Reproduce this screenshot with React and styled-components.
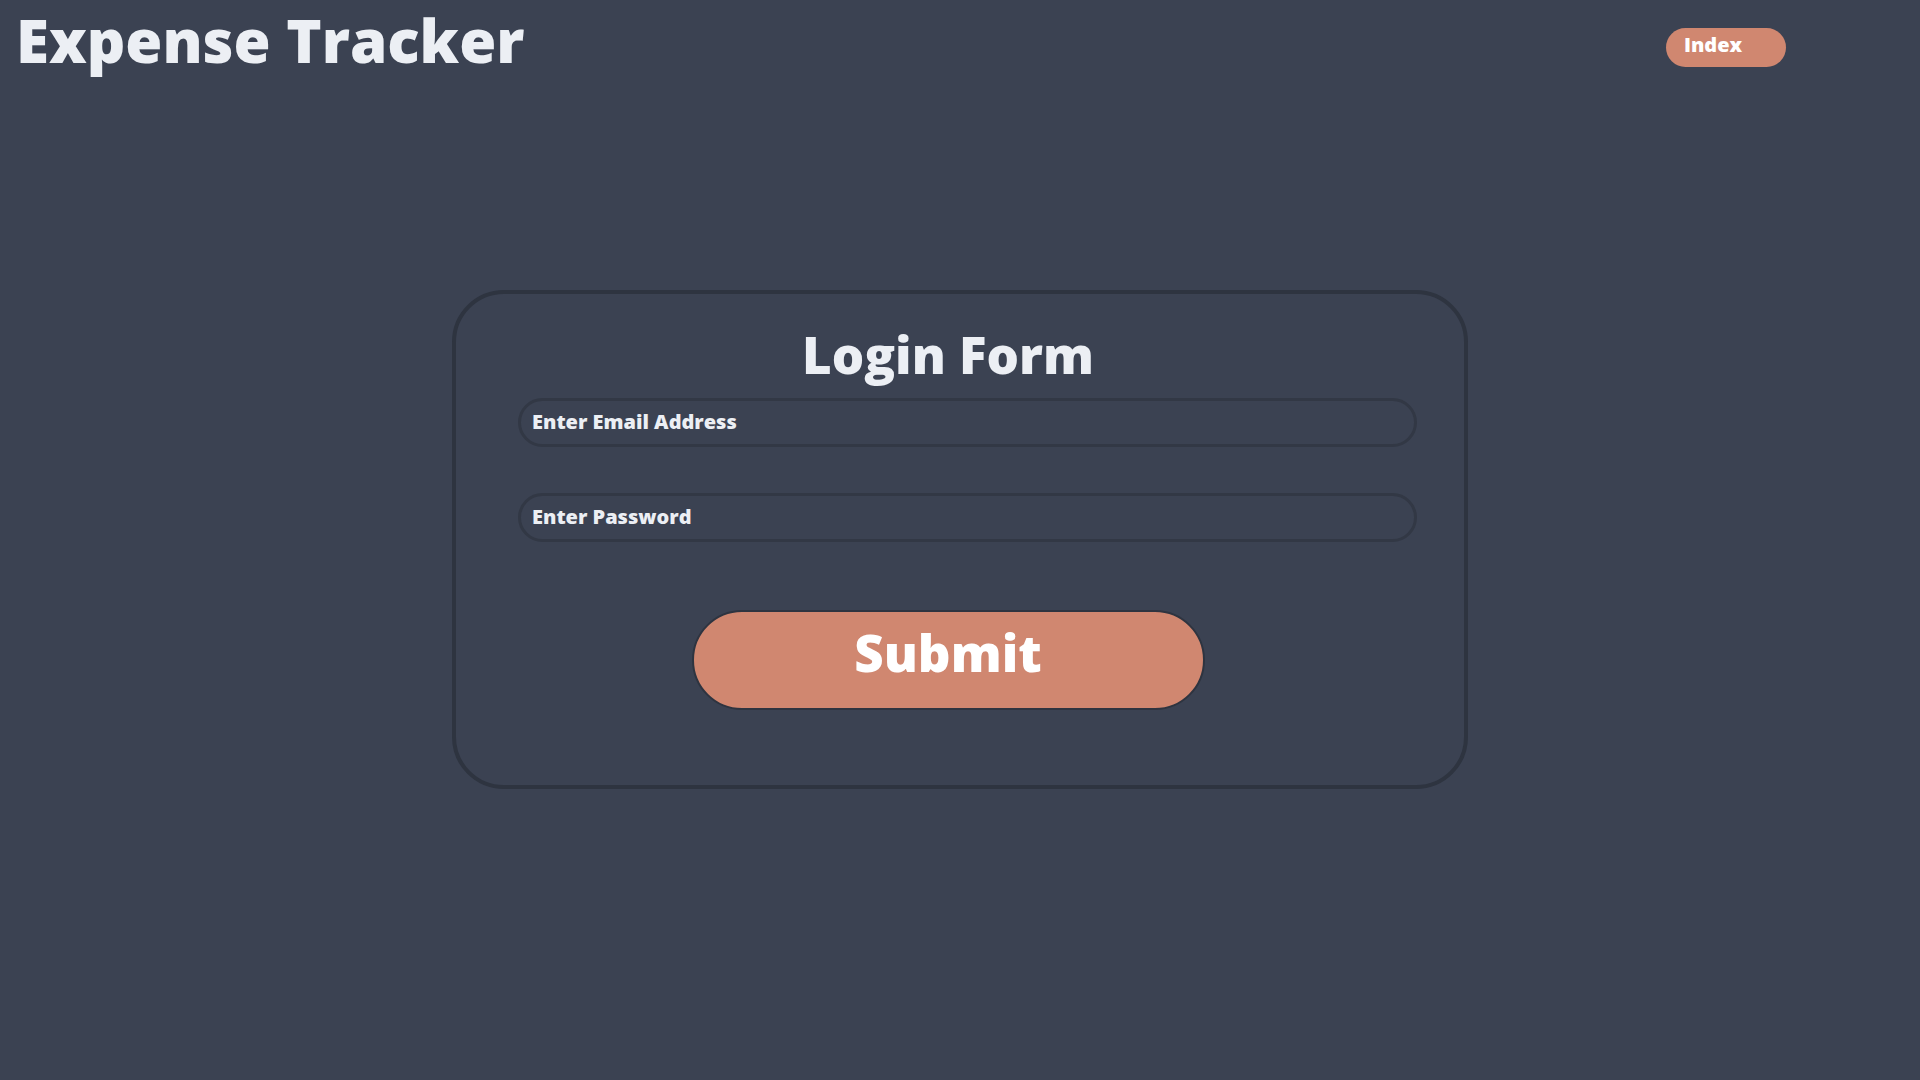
import React from "react";
import styled, { createGlobalStyle } from "styled-components";

const GlobalStyle = createGlobalStyle`
  html, body {
    margin: 0;
    padding: 0;
    background: #3b4252;
    min-height: 100vh;
  }
  body {
    font-family: "Open Sans", "Liberation Sans", sans-serif;
    color: #eceff4;
  }
`;

const App = () => {
  return (
    <>
      <GlobalStyle />
      <Page>
        <Header>
          <Title>Expense Tracker</Title>
          <NavButton type="button">Index</NavButton>
        </Header>
        <Card>
          <FormTitle>Login Form</FormTitle>
          <Field type="email" placeholder="Enter Email Address" />
          <Field type="password" placeholder="Enter Password" />
          <Submit type="submit">Submit</Submit>
        </Card>
      </Page>
    </>
  );
};

const Page = styled.div`
  min-height: 100vh;
  background: #3b4252;
`;

const Header = styled.header`
  display: flex;
  justify-content: space-between;
  align-items: flex-start;
  padding: 0 134px 0 16px;
  height: 87px;
`;

const Title = styled.h1`
  margin: 0;
  font-size: 60px;
  font-weight: 800;
  color: #eceff4;
  line-height: 80px;
`;

const NavButton = styled.button`
  width: 120px;
  height: 39px;
  margin-top: 28px;
  padding: 0 0 6px 18px;
  text-align: left;
  border: none;
  border-radius: 20px;
  background: #d08770;
  color: #fff;
  font-family: "Open Sans", "Liberation Sans", sans-serif;
  font-size: 20px;
  font-weight: 800;
  cursor: pointer;
`;

const Card = styled.form`
  width: 984px;
  margin: 203px auto 0;
  border: 4px solid #2e3440;
  border-radius: 52px;
  padding: 24px 24px 75px 0;
  box-sizing: content-box;
  display: flex;
  flex-direction: column;
  align-items: center;
`;

const FormTitle = styled.h2`
  margin: 0 0 8px;
  font-size: 51px;
  font-weight: 800;
  color: #eceff4;
  line-height: 72px;
`;

const Field = styled.input`
  align-self: flex-start;
  margin: 0 0 46px 62px;
  width: 899px;
  height: 49px;
  box-sizing: border-box;
  border: 3px solid #323845;
  border-radius: 25px;
  background: transparent;
  padding: 0 11px 2px;
  font-family: "Open Sans", "Liberation Sans", sans-serif;
  font-size: 20px;
  font-weight: 800;
  color: #eceff4;
  outline: none;

  &::placeholder {
    color: #eceff4;
    opacity: 1;
  }

  & + & {
    margin-bottom: 68px;
  }
`;

const Submit = styled.button`
  width: 513px;
  height: 100px;
  padding: 0 0 16px;
  border: 2px solid #2e3440;
  border-radius: 50px;
  background: #d08770;
  color: #fff;
  font-family: "Open Sans", "Liberation Sans", sans-serif;
  font-size: 51px;
  font-weight: 800;
  cursor: pointer;
`;

export default App;
